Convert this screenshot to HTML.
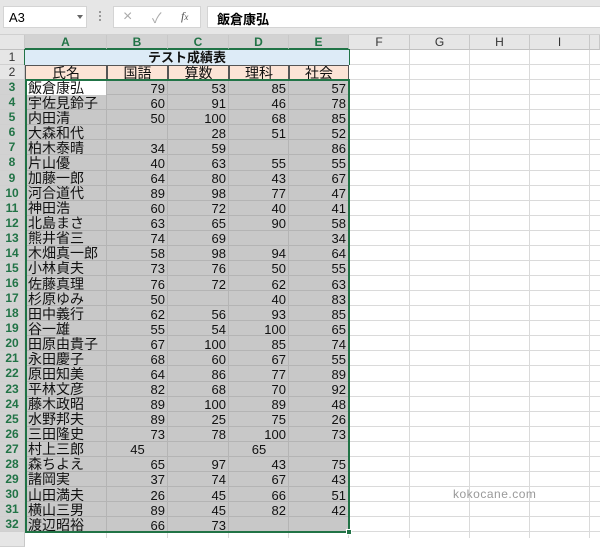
<!DOCTYPE html>
<html><head><meta charset="utf-8">
<style>
*{margin:0;padding:0;box-sizing:border-box}
body{width:600px;height:538px;overflow:hidden;background:#fff;font-family:"Liberation Sans","Noto Sans CJK JP",sans-serif;position:relative}
.top{position:absolute;left:0;top:0;width:600px;height:35px;background:#e6e6e6;border-bottom:1px solid #d0d0d0}
.box{position:absolute;background:#fff;border:1px solid #d4d4d4;top:6px;height:22px}
.grid{position:absolute;left:0;top:35px}
.c{position:absolute;font-size:13px;line-height:15px;color:#111;white-space:nowrap;overflow:hidden}
.rh{position:absolute;left:0;width:25px;text-align:center;font-size:12px;color:#333;background:#e6e6e6;border-bottom:1px solid #d0d0d0;border-right:1px solid #c8c8c8}
.rh.s{background:#d2d2d2;color:#217346;font-weight:bold}
.ch{position:absolute;top:0;height:15px;text-align:center;font-size:12px;line-height:15px;background:#e6e6e6;border-right:1px solid #c8c8c8;border-bottom:1px solid #c0c0c0;color:#333}
.ch.s{background:#d2d2d2;color:#217346;font-weight:bold;border-bottom:2px solid #217346}
.vl{position:absolute;width:1px;background:#dadada}
.hl{position:absolute;height:1px;background:#dadada}
</style></head><body>
<div class="top"></div>
<div class="box" style="left:3px;width:84px"><span style="position:absolute;left:5px;top:3px;font-size:13px">A3</span><span style="position:absolute;left:73px;top:8px;width:0;height:0;border-left:3px solid transparent;border-right:3px solid transparent;border-top:4px solid #666"></span></div>
<div style="position:absolute;left:99px;top:11px;width:2px;height:12px;background:repeating-linear-gradient(#999 0 2px,transparent 2px 4px)"></div>
<div class="box" style="left:113px;width:88px"><span style="position:absolute;left:9px;top:1px;font-size:16px;color:#aaa">×</span><span style="position:absolute;left:38px;top:1px;font-size:14px;color:#aaa">✓</span><span style="position:absolute;left:67px;top:2px;font-size:12px;font-style:italic;font-family:'Liberation Serif',serif;color:#555">f<span style="font-size:9px">x</span></span></div>
<div class="box" style="left:207px;width:400px"><span style="position:absolute;left:9px;top:2px;font-size:13px;font-weight:bold">飯倉康弘</span></div>
<div id="g"></div>
<script>
var cols=[25,107,168,229,289,349,410,470,530,590,600];
var names="ABCDEFGHI";
var top0=50,rh=15.07;
var data=[
["飯倉康弘",79,53,85,57],["宇佐見鈴子",60,91,46,78],["内田清",50,100,68,85],["大森和代","",28,51,52],["柏木泰晴",34,59,"",86],["片山優",40,63,55,55],["加藤一郎",64,80,43,67],["河合道代",89,98,77,47],["神田浩",60,72,40,41],["北島まさ",63,65,90,58],["熊井省三",74,69,"",34],["木畑真一郎",58,98,94,64],["小林貞夫",73,76,50,55],["佐藤真理",76,72,62,63],["杉原ゆみ",50,"",40,83],["田中義行",62,56,93,85],["谷一雄",55,54,100,65],["田原由貴子",67,100,85,74],["永田慶子",68,60,67,55],["原田知美",64,86,77,89],["平林文彦",82,68,70,92],["藤木政昭",89,100,89,48],["水野邦夫",89,25,75,26],["三田隆史",73,78,100,73],["村上三郎","c45","","c65",""],["森ちよえ",65,97,43,75],["諸岡実",37,74,67,43],["山田満夫",26,45,66,51],["横山三男",89,45,82,42],["渡辺昭裕",66,73,"",""]];
var h="";
function Y(r){return top0+(r-1)*rh;}
// gridlines
for(var i=1;i<cols.length-1;i++)h+='<div class="vl" style="left:'+(cols[i]-1)+'px;top:50px;height:488px"></div>';
for(var r=1;r<=33;r++)h+='<div class="hl" style="left:25px;top:'+(Y(r)-1)+'px;width:575px"></div>';
// column headers
h+='<div class="ch" style="left:0;width:25px;top:35px"></div>';
for(var i=0;i<9;i++)h+='<div class="ch'+(i<5?' s':'')+'" style="left:'+cols[i]+'px;width:'+(cols[i+1]-cols[i])+'px;top:35px">'+names[i]+'</div>';
h+='<div class="ch" style="left:590px;width:10px;top:35px"></div>';
// row headers
for(var r=1;r<=33;r++)h+='<div class="rh'+(r>=3&&r<=32?' s':'')+'" style="top:'+Y(r)+'px;height:'+rh+'px;line-height:'+rh+'px">'+(r<=32?r:'')+'</div>';
// row1
h+='<div class="c" style="left:25px;top:'+Y(1)+'px;width:324px;height:'+rh+'px;background:#ddebf7;text-align:center;font-weight:bold">テスト成績表</div>';
// row2
var hd=["氏名","国語","算数","理科","社会"];
for(var i=0;i<5;i++)h+='<div class="c" style="left:'+cols[i]+'px;top:'+Y(2)+'px;width:'+(cols[i+1]-cols[i])+'px;height:'+(rh+0.5)+'px;background:#fce4d6;border:1px solid #555;text-align:center;font-size:14px;line-height:14px">'+hd[i]+'</div>';
// selection
h+='<div style="position:absolute;left:25px;top:'+Y(3)+'px;width:324px;height:'+(30*rh)+'px;background:#c8c8c8"></div>';
for(var i=1;i<5;i++)h+='<div class="vl" style="background:#b4b4b4;left:'+(cols[i]-1)+'px;top:'+Y(3)+'px;height:'+(30*rh)+'px"></div>';
for(var r=4;r<=32;r++)h+='<div class="hl" style="background:#b4b4b4;left:25px;top:'+(Y(r)-1)+'px;width:324px"></div>';
h+='<div style="position:absolute;left:27px;top:'+(Y(3)+1)+'px;width:79px;height:'+(rh-1)+'px;background:#fff"></div>';
for(var k=0;k<30;k++){var r=k+3,d=data[k];
 for(var i=0;i<5;i++){var v=String(d[i]);if(v==="")continue;var al=i==0?'left':'right',pl=i==0?'padding-left:3px;':'padding-right:3px;';
  if(v[0]=='c'){v=v.slice(1);al='center';pl='';}
  h+='<div class="c" style="left:'+cols[i]+'px;top:'+(Y(r)+0.5)+'px;width:'+(cols[i+1]-cols[i])+'px;text-align:'+al+';'+pl+'font-size:'+(i==0?14:13)+'px">'+v+'</div>';}}
h+='<div style="position:absolute;left:24px;top:'+(Y(1)-1)+'px;width:326px;height:'+(rh+1)+'px;border:1px solid #217346;border-bottom:none"></div>';
h+='<div style="position:absolute;left:25px;top:'+(Y(3)-1)+'px;width:325px;height:'+(30*rh+2)+'px;border:2px solid #217346"></div>';
h+='<div style="position:absolute;left:346px;top:'+(Y(33)-3)+'px;width:6px;height:6px;background:#217346;border:1px solid #fff"></div>';
h+='<div class="c" style="left:453px;top:487px;font-size:12px;color:#999;letter-spacing:0.5px">kokocane.com</div>';
document.getElementById('g').innerHTML=h;
</script>
</body></html>
